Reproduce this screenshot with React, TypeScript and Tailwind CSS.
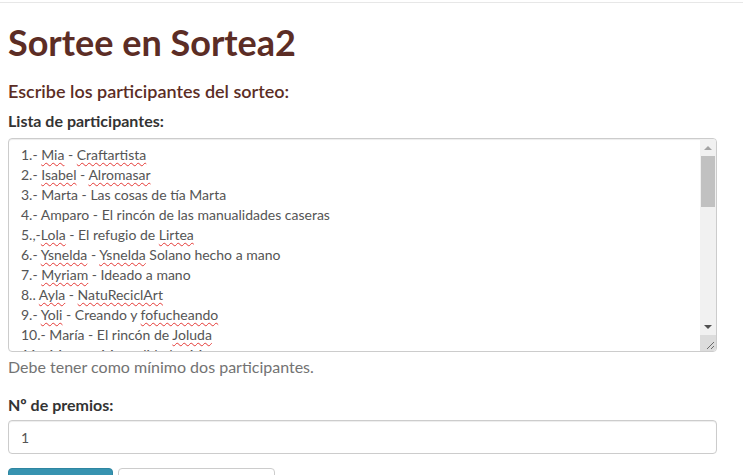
const participants: [string, string[]][] = [
  ["1.- ", ["~Mia", " - ", "~Craftartista"]],
  ["2.- ", ["~Isabel", " - ", "~Alromasar"]],
  ["3.- ", ["Marta - Las cosas de tía Marta"]],
  ["4.- ", ["Amparo - El rincón de las manualidades caseras"]],
  ["5.,-", ["~Lola", " - El refugio de ", "~Lirtea"]],
  ["6.- ", ["~Ysnelda", " - ", "~Ysnelda", " Solano hecho a mano"]],
  ["7.- ", ["~Myriam", " - Ideado a mano"]],
  ["8.. ", ["~Ayla", " - ", "~NatuReciclArt"]],
  ["9.- ", ["~Yoli", " - Creando y ", "~fofucheando"]],
  ["10.- ", ["María - El rincón de ", "~Joluda"]],
  ["11.- ", ["Mayte - Manualidades Mayte"]],
];

function Line({ num, parts }: { num: string; parts: string[] }) {
  return (
    <div className="h-5 whitespace-pre">
      {num}
      {parts.map((p, i) =>
        p.startsWith("~") ? (
          <span key={i} className="underline decoration-wavy decoration-[#e53935] decoration-1 underline-offset-[2px]">
            {p.slice(1)}
          </span>
        ) : (
          <span key={i}>{p}</span>
        )
      )}
    </div>
  );
}

function Scrollbar() {
  return (
    <div className="w-[16px] flex flex-col bg-[#f1f1f1]">
      <div className="h-[17px] flex items-center justify-center">
        <div className="w-0 h-0 border-l-[4px] border-r-[4px] border-b-[4px] border-l-transparent border-r-transparent border-b-[#a3a3a3]" />
      </div>
      <div className="h-[51px] mx-[1px] bg-[#c1c1c1]" />
      <div className="flex-1" />
      <div className="h-[17px] flex items-center justify-center">
        <div className="w-0 h-0 border-l-[4px] border-r-[4px] border-t-[4px] border-l-transparent border-r-transparent border-t-[#505050]" />
      </div>
      <div className="h-[16px] bg-[#dcdcdc] flex items-end justify-end">
        <svg width="10" height="10" viewBox="0 0 10 10" className="mb-[1px] mr-[1px]">
          <path d="M9 2 L2 9 M9 6 L6 9" stroke="#6b6b6b" strokeWidth="1" />
        </svg>
      </div>
    </div>
  );
}

export default function App() {
  return (
    <div className="w-[743px] h-[475px] overflow-hidden bg-white font-['Lato','Open_Sans',sans-serif]">
      <div className="h-[2px]" />
      <div className="h-px bg-[#e7e7e7]" />
      <div className="px-2">
        <h1 className="mt-[19px] text-[36px] leading-[40px] font-bold text-[#5c2d25]">Sortee en Sortea2</h1>
        <h4 className="mt-[18px] text-[18px] leading-[22px] font-semibold text-[#5c2d25]">
          Escribe los participantes del sorteo:
        </h4>
        <label className="block mt-[9px] text-[16px] leading-5 font-bold text-[#333]">Lista de participantes:</label>
        <div className="mt-[7px] w-[709px] h-[214px] border border-[#ccc] rounded-[4px] flex overflow-hidden shadow-[inset_0_1px_1px_rgba(0,0,0,0.075)]">
          <div className="flex-1 pl-3 pt-[5px] text-[14px] text-[#555] overflow-hidden">
            {participants.map(([n, p], i) => (
              <Line key={i} num={n} parts={p} />
            ))}
          </div>
          <Scrollbar />
        </div>
        <p className="mt-[5px] text-[16px] leading-[20px] text-[#737373]">Debe tener como mínimo dos participantes.</p>
        <label className="block mt-[18px] text-[16px] leading-5 font-bold text-[#333]">Nº de premios:</label>
        <div className="mt-[5px] w-[709px] h-[34px] border border-[#ccc] rounded-[4px] px-3 flex items-center text-[14px] text-[#555] shadow-[inset_0_1px_1px_rgba(0,0,0,0.075)]">
          1
        </div>
        <div className="mt-[14px] flex gap-[5px]">
          <button className="w-[105px] h-[34px] rounded-[4px] bg-[#3793b0] border border-[#2f86a1] text-white text-[14px]">
            Sortear
          </button>
          <button className="w-[157px] h-[34px] rounded-[4px] bg-white border border-[#ccc] text-[#333] text-[14px]">
            Limpiar
          </button>
        </div>
      </div>
    </div>
  );
}
